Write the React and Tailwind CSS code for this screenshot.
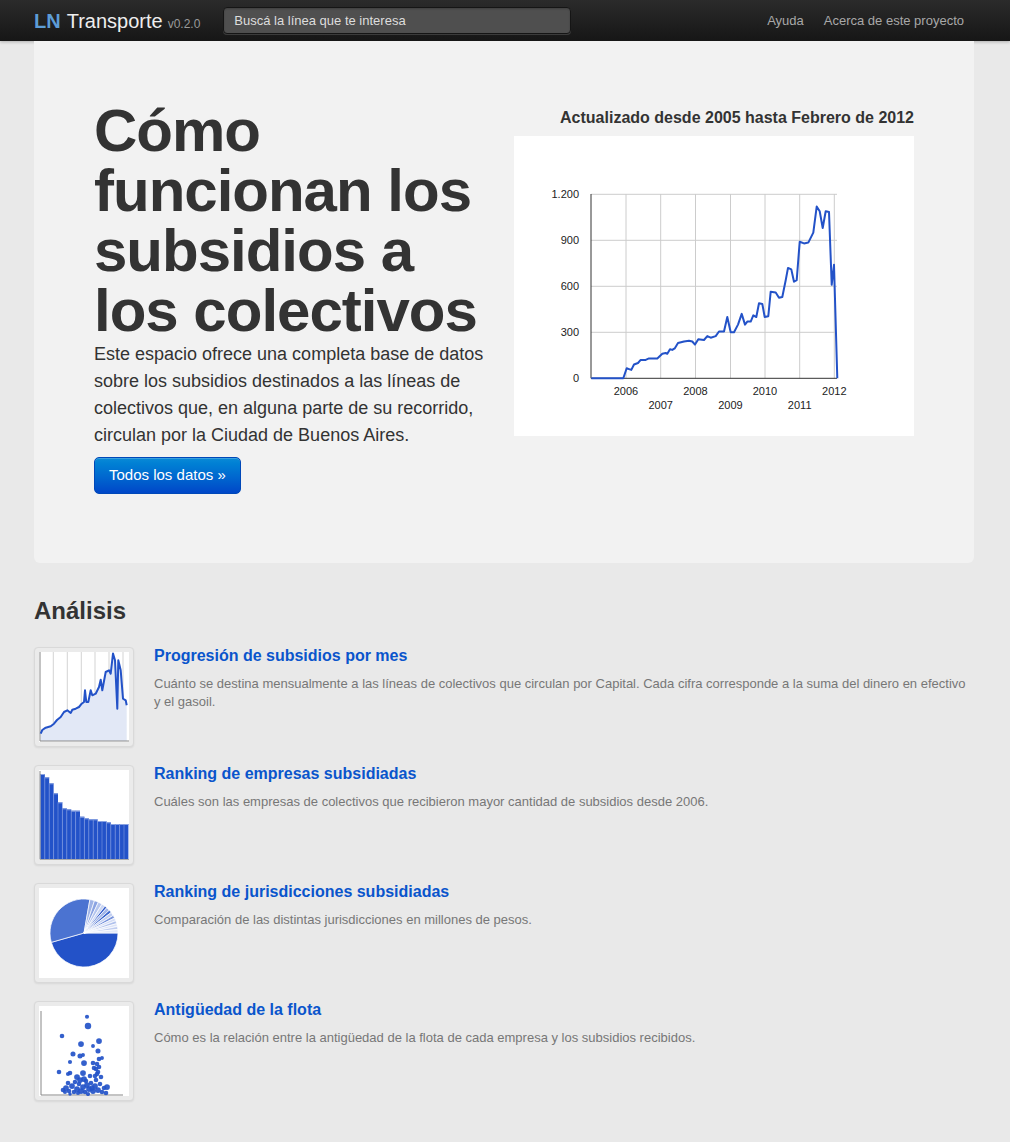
import React from "react";

const FONT = { fontFamily: '"Liberation Sans", Arial, Helvetica, sans-serif' };

// subsidy series, [px in chart-x*3, value in millions]
const series = [
  [232, 0], [328, 0], [338, 65], [345, 60], [352, 55], [360, 90], [372, 100], [380, 120], [395, 120],
  [405, 130], [430, 130], [445, 160], [455, 165], [460, 160], [468, 190], [475, 185], [482, 195],
  [492, 230], [510, 240], [525, 245], [535, 240], [543, 220], [553, 255], [570, 250], [580, 275],
  [590, 265], [605, 275], [615, 305], [630, 305], [640, 400], [650, 300], [660, 300], [672, 350],
  [683, 420], [693, 350], [700, 370], [710, 370], [718, 410], [727, 400], [735, 490], [745, 485],
  [752, 400], [763, 405], [770, 565], [785, 560], [795, 525], [805, 530], [815, 640], [822, 720],
  [832, 710], [840, 630], [848, 640], [857, 890], [870, 880], [883, 885], [898, 950], [908, 1120],
  [917, 1090], [926, 980], [935, 1090], [945, 1085], [953, 610], [960, 740], [970, 0],
];

const BLUE = "#2352c8";

const MainChart = () => {
  const base = 242.3;
  const yOf = (v) => base - v * (184 / 1200);
  const pts = series.map(([x, v]) => `${(x / 3).toFixed(1)},${yOf(v).toFixed(1)}`).join(" ");
  const years = [
    { y: "2006", x: 112, row: 0 },
    { y: "2007", x: 146.7, row: 1 },
    { y: "2008", x: 181.5, row: 0 },
    { y: "2009", x: 216.5, row: 1 },
    { y: "2010", x: 251, row: 0 },
    { y: "2011", x: 285.7, row: 1 },
    { y: "2012", x: 320.3, row: 0 },
  ];
  const ticks = [
    { l: "1.200", v: 1200 },
    { l: "900", v: 900 },
    { l: "600", v: 600 },
    { l: "300", v: 300 },
  ];
  return (
    <svg width="400" height="300" viewBox="0 0 400 300" className="block bg-white">
      {ticks.map((t) => (
        <line key={t.l} x1="77" x2="323" y1={yOf(t.v)} y2={yOf(t.v)} stroke="#cccccc" strokeWidth="1" />
      ))}
      {years.map((yr) => (
        <line key={yr.y} x1={yr.x} x2={yr.x} y1="58" y2={base} stroke="#cccccc" strokeWidth="1" />
      ))}
      <line x1="77" x2="77" y1="58" y2={base} stroke="#333" strokeWidth="1" />
      <line x1="77" x2="323" y1={base} y2={base} stroke="#333" strokeWidth="1" />
      <polyline points={pts} fill="none" stroke={BLUE} strokeWidth="2" strokeLinejoin="round" />
      {ticks.concat([{ l: "0", v: 0 }]).map((t) => (
        <text key={t.l} x="65" y={yOf(t.v) + 4} textAnchor="end" fontSize="11" fill="#222" style={FONT}>
          {t.l}
        </text>
      ))}
      {years.map((yr) => (
        <text key={yr.y} x={yr.x} y={yr.row ? 273 : 259} textAnchor="middle" fontSize="11" fill="#222" style={FONT}>
          {yr.y}
        </text>
      ))}
    </svg>
  );
};

const thumbLine = [
  [1.7, 81.7], [3.3, 78], [6.7, 75.7], [11.7, 74.3], [15, 71.7], [18, 68], [21.7, 65], [25, 60], [28.3, 58.3],
  [31.7, 61], [33.3, 57.7], [36.7, 56.7], [40, 55], [42.7, 51.7], [45, 50], [46, 38.3], [47.3, 50],
  [49.3, 50], [51.7, 38.3], [53.3, 43.3], [56.7, 41.7], [60, 35], [61.7, 27.7], [63.3, 38.3], [66.7, 20],
  [70, 18.3], [71.7, 21.7], [74, 1.5], [76, 8.3], [78.3, 56.7], [79.3, 8.3], [81.7, 18.3], [84, 46.7],
  [86.7, 48.3], [87.7, 53.3],
];

const LineThumb = () => {
  const line = thumbLine.map(([x, y]) => `${x},${y}`).join(" ");
  return (
    <svg width="90" height="90" viewBox="0 0 90 90" className="block bg-white">
      {[14.3, 28.3, 42.3, 56, 70, 84].map((x) => (
        <line key={x} x1={x} x2={x} y1="0" y2="89" stroke="#c8c8c8" strokeWidth="0.8" />
      ))}
      <polygon points={`1.7,89 ${line} 87.7,89`} fill="#e2e8f6" />
      <line x1="1" x2="1" y1="0" y2="89" stroke="#888" strokeWidth="1" />
      <line x1="1" x2="90" y1="89" y2="89" stroke="#888" strokeWidth="1" />
      <polyline points={line} fill="none" stroke={BLUE} strokeWidth="2" strokeLinejoin="round" />
    </svg>
  );
};

const barTops = [4, 7.3, 13.3, 23.3, 32.3, 38.3, 39.3, 40.7, 40.7, 46.7, 48.3, 49.3, 49.3, 51, 51, 52.3, 54, 54, 54, 54];

const BarThumb = () => (
  <svg width="90" height="90" viewBox="0 0 90 90" className="block bg-white">
    {barTops.map((t, i) => (
      <g key={i}>
        <rect x={1.4 + i * 4.4} y={t} width="4.4" height={89 - t} fill={BLUE} />
        <rect x={1.4 + i * 4.4} y={t} width="4.4" height="1" fill="#8aa3e2" />
        <line x1={1.4 + i * 4.4} x2={1.4 + i * 4.4} y1={t} y2="89" stroke="#7f9ae0" strokeWidth="0.6" />
      </g>
    ))}
    <line x1="1" x2="1" y1="1" y2="89.5" stroke="#888" strokeWidth="1" />
    <line x1="1" x2="90" y1="89.5" y2="89.5" stroke="#aaa" strokeWidth="1" />
  </svg>
);

const pieSlices = [
  [0, 164, "#2352c8"],
  [164, 280, "#4b73d1"],
  [280, 288, "#9fb3e6"],
  [288, 295, "#8aa3e2"],
  [295, 302, "#b5c5ee"],
  [302, 308, "#c9d5f3"],
  [308, 312, "#2a55c9"],
  [312, 318, "#a3b6e8"],
  [318, 323, "#3e68ce"],
  [323, 329, "#c2cff1"],
  [329, 334, "#7a95dc"],
  [334, 339, "#d4ddf5"],
  [339, 344, "#b0c1ec"],
  [344, 349, "#dce3f7"],
  [349, 354, "#c0cdf0"],
  [354, 360, "#e3e9f9"],
];

const PieThumb = () => {
  const cx = 45;
  const cy = 45;
  const r = 34;
  const pt = (a) => {
    const rad = (a * Math.PI) / 180;
    return `${(cx + r * Math.cos(rad)).toFixed(2)},${(cy + r * Math.sin(rad)).toFixed(2)}`;
  };
  return (
    <svg width="90" height="90" viewBox="0 0 90 90" className="block bg-white">
      {pieSlices.map(([a, b, c]) => (
        <path
          key={a}
          d={`M${cx},${cy} L${pt(a)} A${r},${r} 0 ${b - a > 180 ? 1 : 0} 1 ${pt(b)} Z`}
          fill={c}
          stroke="#fff"
          strokeWidth="0.7"
        />
      ))}
    </svg>
  );
};

const dots = [
  [48, 10.7, 1.8], [49, 20, 2.8], [23, 30, 2], [42, 38, 2.5], [60, 35, 2.5], [54, 40, 1.7], [59, 45, 2.2],
  [34, 48, 2.2], [41, 50, 2.2], [44, 49, 1.7], [60, 53, 2], [63, 52, 1.7], [31, 56, 1.8], [45, 57, 2.5],
  [54, 57, 2], [58, 58, 2], [20, 66, 2], [31, 67, 2], [29, 68, 1.8], [44, 67, 2.5], [57, 63, 2], [59, 66, 2],
  [56, 70, 2], [38, 71, 2.5], [68, 81, 2.5], [67, 87, 2],
  [24, 84, 2], [27, 82, 2.5], [30, 85, 2], [33, 80, 2.5], [35, 86, 2], [38, 83, 2.5], [40, 78, 2],
  [42, 85, 2.5], [44, 81, 2.5], [46, 86, 2], [48, 79, 2.5], [50, 83, 2.5], [52, 77, 2], [54, 85, 2.5],
  [56, 80, 2.5], [57, 74, 2], [59, 84, 2.5], [61, 78, 2], [62, 71, 2], [63, 86, 2], [65, 82, 2],
  [36, 76, 2], [45, 73, 2.5], [51, 70, 2], [58, 68, 2], [60, 61, 2], [55, 62, 2], [47, 75, 2],
  [41, 74, 2.5], [29, 77, 2], [26, 86, 1.8], [31, 88, 1.5], [49, 88, 1.8], [53, 82, 2.3], [39, 87, 1.8],
];

const ScatterThumb = () => (
  <svg width="90" height="90" viewBox="0 0 90 90" className="block bg-white">
    <line x1="2" x2="2" y1="5" y2="89" stroke="#888" strokeWidth="1" />
    <line x1="2" x2="84" y1="89" y2="89" stroke="#888" strokeWidth="1" />
    {dots.map(([x, y, r], i) => (
      <circle key={i} cx={x} cy={y} r={r * 1.15} fill={BLUE} fillOpacity="0.92" />
    ))}
  </svg>
);

const analyses = [
  {
    title: "Progresión de subsidios por mes",
    text: "Cuánto se destina mensualmente a las líneas de colectivos que circulan por Capital. Cada cifra corresponde a la suma del dinero en efectivo y el gasoil.",
    Thumb: LineThumb,
  },
  {
    title: "Ranking de empresas subsidiadas",
    text: "Cuáles son las empresas de colectivos que recibieron mayor cantidad de subsidios desde 2006.",
    Thumb: BarThumb,
  },
  {
    title: "Ranking de jurisdicciones subsidiadas",
    text: "Comparación de las distintas jurisdicciones en millones de pesos.",
    Thumb: PieThumb,
  },
  {
    title: "Antigüedad de la flota",
    text: "Cómo es la relación entre la antigüedad de la flota de cada empresa y los subsidios recibidos.",
    Thumb: ScatterThumb,
  },
];

export default function App() {
  return (
    <div className="min-h-screen bg-[#e9e9e9] text-[#333]" style={FONT}>
      {/* Navbar */}
      <div className="h-[41px] bg-gradient-to-b from-[#2b2b2b] to-[#161616] shadow-[0_1px_3px_rgba(0,0,0,0.25)]">
        <div className="ml-[34px] flex h-full w-[940px] items-center">
          <div className="flex items-baseline">
            <span className="text-[20px] font-bold text-[#5d9cd6]">LN</span>
            <span className="ml-[6px] text-[20px] text-[#eeeeee]">Transporte</span>
            <span className="ml-[5px] text-[12px] text-[#999]">v0.2.0</span>
          </div>
          <div className="ml-[23px] flex h-[27px] w-[348px] items-center rounded-[4px] border border-[#151515] bg-[#4f4f4f] pl-[10px] text-[13px] text-[#dddddd] shadow-[inset_0_1px_2px_rgba(0,0,0,0.2),0_1px_0_rgba(255,255,255,0.15)]">
            Buscá la línea que te interesa
          </div>
          <div className="ml-auto flex text-[13px] text-[#a8a8a8]">
            <span className="px-[10px]">Ayuda</span>
            <span className="px-[10px]">Acerca de este proyecto</span>
          </div>
        </div>
      </div>

      <div className="ml-[34px] w-[940px] pb-[40px]">
        {/* Hero */}
        <div className="mb-[30px] flex justify-between rounded-b-[6px] bg-[#f2f2f2] px-[60px] pb-[69px] pt-[60px]">
          <div className="w-[400px]">
            <h1 className="text-[60px] font-bold leading-[60px] tracking-[-1px] text-[#333]">
              Cómo funcionan los subsidios a los colectivos
            </h1>
            <p className="mb-[8px] text-[18px] leading-[27px] text-[#333]">
              Este espacio ofrece una completa base de datos sobre los subsidios destinados a las líneas de colectivos que, en alguna parte de su recorrido, circulan por la Ciudad de Buenos Aires.
            </p>
            <button className="h-[37px] rounded-[5px] border border-[#0048b8] bg-gradient-to-b from-[#0a8ad6] to-[#0046c8] px-[14px] text-[15px] text-white shadow-[inset_0_1px_0_rgba(255,255,255,0.2)]">
              Todos los datos »
            </button>
          </div>
          <div className="w-[400px]">
            <h3 className="mb-[5px] mt-[3px] text-right text-[16px] font-bold leading-[27px] text-[#333]">
              Actualizado desde 2005 hasta Febrero de 2012
            </h3>
            <MainChart />
          </div>
        </div>

        {/* Análisis */}
        <h2 className="mb-[18px] text-[24px] font-bold leading-[36px] text-[#333]">Análisis</h2>
        <div className="flex flex-col gap-[18px]">
          {analyses.map(({ title, text, Thumb }) => (
            <div key={title} className="flex">
              <div className="h-[100px] w-[100px] shrink-0 rounded-[4px] border border-[#d9d9d9] bg-[#ebebeb] p-[4px] shadow-[0_1px_2px_rgba(0,0,0,0.08)]">
                <Thumb />
              </div>
              <div className="ml-[20px]">
                <h4 className="mb-[10px] text-[16px] font-bold leading-[18px] text-[#0a55cc]">{title}</h4>
                <p className="text-[13px] leading-[18px] text-[#777]">{text}</p>
              </div>
            </div>
          ))}
        </div>
      </div>
    </div>
  );
}
